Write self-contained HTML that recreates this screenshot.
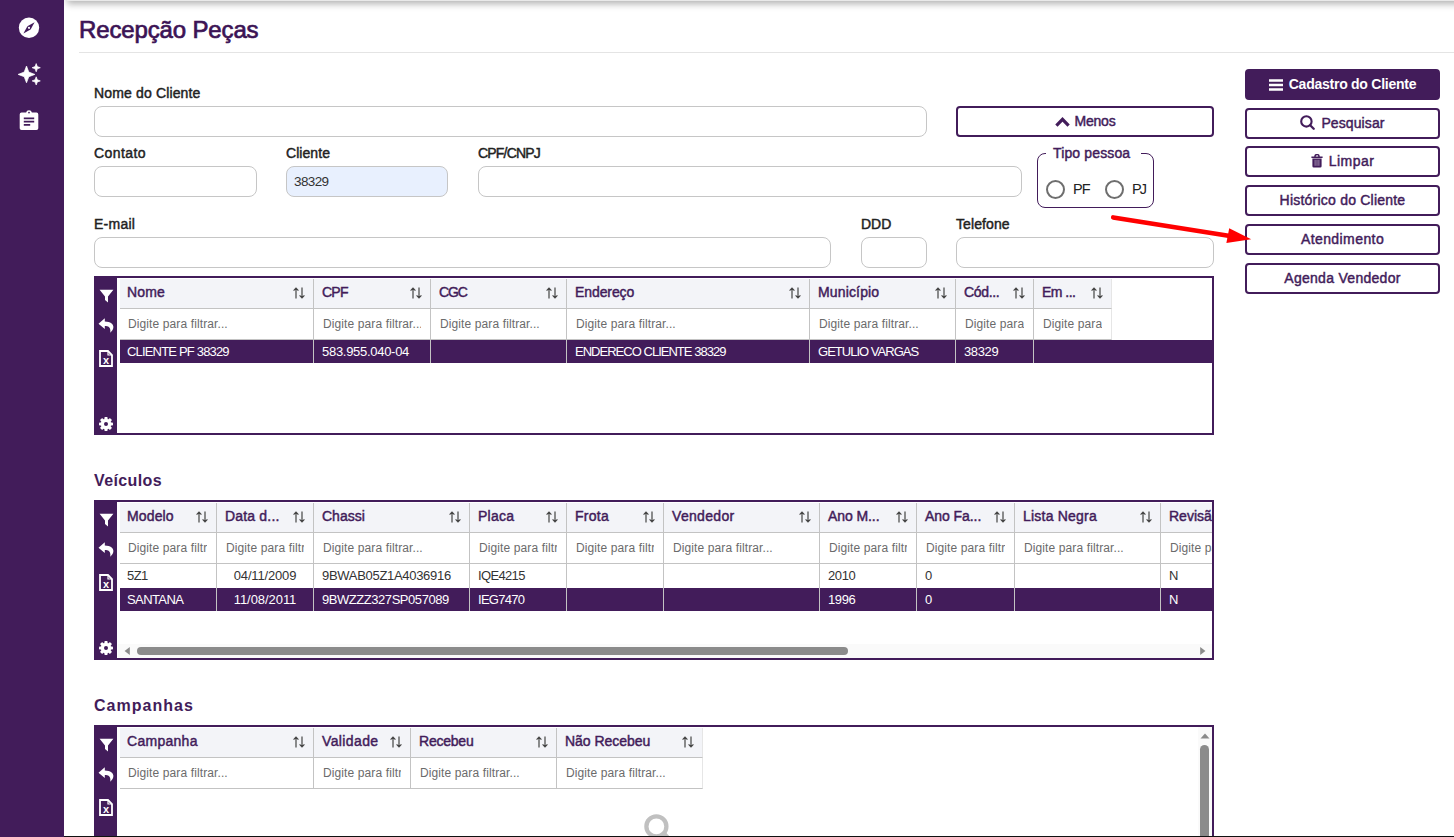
<!DOCTYPE html>
<html lang="pt-BR">
<head>
<meta charset="utf-8">
<title>Recepção Peças</title>
<style>
*{box-sizing:border-box;margin:0;padding:0}
html,body{width:1454px;height:837px;overflow:hidden;background:#fff}
body{position:relative;font-family:"Liberation Sans",sans-serif;color:#222;font-size:14px}
.abs{position:absolute}
#side{left:0;top:0;width:64px;height:837px;background:#421c5a}
#topshadow{left:67px;top:-11px;width:1400px;height:12px;background:#e9e9e9;box-shadow:0 3px 7px rgba(0,0,0,.3)}
#side{z-index:2}
h1{position:absolute;left:79px;top:15px;font-size:24px;line-height:30px;font-weight:normal;color:#3c1355;white-space:nowrap;-webkit-text-stroke:.7px #3c1355}
#hr{left:79px;top:52px;width:1375px;height:1px;background:#e4e4e4}
.sb{-webkit-text-stroke:.45px currentColor}
.lbl{position:absolute;font-size:14px;line-height:16px;color:#222;white-space:nowrap}
.inp{position:absolute;height:31px;border:1px solid #c6c6c6;border-radius:8px;background:#fff;font-size:13px;line-height:30px;padding-left:7px;color:#333}
.btn{position:absolute;height:31px;border:2px solid #421c5a;border-radius:4px;background:#fff;color:#421c5a;font-size:14px;line-height:27px;text-align:center;white-space:nowrap}
.btn.fill{background:#421c5a;color:#fff}
.btn svg{vertical-align:-2px;margin-right:6px}
h2{position:absolute;left:94px;font-size:16px;line-height:20px;font-weight:bold;color:#421c5a;white-space:nowrap}
.grid{position:absolute;left:94px;width:1120px;border:2px solid #421c5a;background:#fff;overflow:hidden}
.strip{position:absolute;left:0;top:0;bottom:0;width:21px;background:#421c5a}
.strip svg{position:absolute;left:3px}
.th,.tf,.td{position:absolute;white-space:nowrap;overflow:hidden}
.th{top:1px;height:30px;background:#f3f4f8;border-right:1px solid #c3c3c3;border-bottom:1px solid #c3c3c3;color:#421c5a;font-size:14px;line-height:27px;padding-left:7px}
.th i{position:absolute;right:8px;top:8px;width:12px;height:12px;line-height:0}
.th i svg{display:block}
.tf{top:31px;height:31px;border-right:1px solid #c3c3c3;border-bottom:1px solid #c3c3c3;color:#6b6b6b;font-size:12px;line-height:30px;padding-left:8px}
.tf b{display:block;font-weight:normal;overflow:hidden;margin-right:9px}
.td{height:24px;font-size:13px;line-height:24px;padding-left:7px;color:#333;border-right:1px solid #c3c3c3}
.sel{position:absolute;left:24px;right:0;height:23px;background:#421c5a}
.td.w{color:#fff;line-height:23px}
.radio{width:19px;height:19px;border:2px solid #6e6e6e;border-radius:50%;background:#fff}
.rtx{font-size:14.5px;line-height:16px;color:#222;white-space:nowrap}
</style>
</head>
<body>
<div id="side" class="abs">
<svg class="abs" style="left:17px;top:16px" width="24" height="24" viewBox="0 0 24 24"><circle cx="12" cy="11.8" r="10.2" fill="#fff"/><path d="M17.6 6.2 L13.6 13.4 L10.4 10.2 Z" fill="#421c5a"/><path d="M6.4 17.4 L10.4 10.2 L13.6 13.4 Z" fill="#421c5a"/><circle cx="12" cy="11.8" r="1.1" fill="#fff"/></svg>
<svg class="abs" style="left:17px;top:62px" width="26" height="26" viewBox="0 0 26 26"><g fill="#fff" stroke="#fff" stroke-width=".7" stroke-linejoin="round"><path d="M9.5 4 L11.8 10.1 L17.9 12.4 L11.8 14.7 L9.5 20.8 L7.2 14.7 L1.1 12.4 L7.2 10.1 Z"/><path d="M19.2 1.6 L20.3 4.6 L23.3 5.7 L20.3 6.8 L19.2 9.8 L18.1 6.8 L15.1 5.7 L18.1 4.6 Z"/><path d="M19.2 14.8 L20.3 17.8 L23.3 18.9 L20.3 20 L19.2 23 L18.1 20 L15.1 18.9 L18.1 17.8 Z"/></g></svg>
<svg class="abs" style="left:18px;top:109px" width="22" height="23" viewBox="0 0 22 23"><path d="M3.5 3.6 h4.6 a3 3 0 0 1 5.8 0 h4.6 a1.8 1.8 0 0 1 1.8 1.8 v13.8 a1.8 1.8 0 0 1 -1.8 1.8 h-15 a1.8 1.8 0 0 1 -1.8 -1.8 v-13.8 a1.8 1.8 0 0 1 1.8 -1.8z" fill="#fff"/><circle cx="11" cy="3.6" r="0.9" fill="#421c5a"/><path d="M5.8 9.4h10.4M5.8 12.6h10.4M5.8 15.8h6.4" stroke="#421c5a" stroke-width="1.8"/></svg>
</div>
<div id="topshadow" class="abs"></div>
<h1><span style="letter-spacing:-0.14px">Recepção Peças</span></h1>
<div id="hr" class="abs"></div>
<div class="lbl sb" style="left:94px;top:85px"><span style="letter-spacing:0.15px">Nome do Cliente</span></div>
<div class="inp" style="left:94px;top:106px;width:833px;"></div>
<div class="btn sb " style="left:956px;top:106px;width:258px"><svg width="15" height="11" viewBox="0 0 15 11" style="vertical-align:-1px;margin-right:5px"><path d="M1.4 9.6 L7.5 3.4 L13.6 9.6" fill="none" stroke="#421c5a" stroke-width="3.2"/></svg><span style="letter-spacing:-0.21px">Menos</span></div>
<div class="lbl sb" style="left:94px;top:145px"><span style="letter-spacing:0.42px">Contato</span></div>
<div class="inp" style="left:94px;top:166px;width:163px;"></div>
<div class="lbl sb" style="left:286px;top:145px"><span style="letter-spacing:0.06px">Cliente</span></div>
<div class="inp" style="left:286px;top:166px;width:162px;background:#e8f0fe;font-size:13.5px"><span style="letter-spacing:-0.61px">38329</span></div>
<div class="lbl sb" style="left:478px;top:145px"><span style="letter-spacing:-0.81px">CPF/CNPJ</span></div>
<div class="inp" style="left:478px;top:166px;width:544px;"></div>
<div class="abs" style="left:1037px;top:153px;width:117px;height:55px;border:1px solid #421c5a;border-radius:8px"></div>
<div class="abs sb" style="left:1046px;top:144px;width:95px;height:18px;background:#fff;color:#421c5a;font-size:14px;line-height:18px;padding-left:7px;white-space:nowrap"><span style="letter-spacing:0.14px">Tipo pessoa</span></div>
<div class="abs radio" style="left:1046px;top:180px"></div>
<div class="abs rtx" style="left:1073px;top:181px"><span style="letter-spacing:-1px">PF</span></div>
<div class="abs radio" style="left:1105px;top:180px"></div>
<div class="abs rtx" style="left:1132px;top:181px"><span style="letter-spacing:-1.8px">PJ</span></div>
<div class="lbl sb" style="left:94px;top:216px"><span style="letter-spacing:0.26px">E-mail</span></div>
<div class="inp" style="left:94px;top:237px;width:737px;"></div>
<div class="lbl sb" style="left:861px;top:216px"><span style="letter-spacing:-0.03px">DDD</span></div>
<div class="inp" style="left:861px;top:237px;width:66px;"></div>
<div class="lbl sb" style="left:956px;top:216px"><span style="letter-spacing:0.1px">Telefone</span></div>
<div class="inp" style="left:956px;top:237px;width:258px;"></div>
<div class="btn fill" style="left:1245px;top:69px;width:195px;font-weight:bold"><svg width="14" height="12" viewBox="0 0 14 12"><path d="M0 1.5h14M0 6h14M0 10.5h14" stroke="#fff" stroke-width="2.4"/></svg><span style="letter-spacing:-0.25px">Cadastro do Cliente</span></div>
<div class="btn sb " style="left:1245px;top:108px;width:195px"><svg width="15" height="15" viewBox="0 0 15 15"><circle cx="6.4" cy="6.4" r="5.2" fill="none" stroke="#421c5a" stroke-width="2.1"/><path d="M10.2 10.2 L13.7 13.7" stroke="#421c5a" stroke-width="2.3" stroke-linecap="round"/></svg><span style="letter-spacing:0.11px">Pesquisar</span></div>
<div class="btn sb " style="left:1245px;top:146px;width:195px"><svg width="12" height="14" viewBox="0 0 12 14"><path d="M0.4 3.2h11.2M4 3V2.2a2 1.6 0 0 1 4 0V3" fill="none" stroke="#421c5a" stroke-width="1.5"/><path d="M1.4 4.6h9.2v7.6a1.4 1.4 0 0 1 -1.4 1.4h-6.4a1.4 1.4 0 0 1 -1.4 -1.4z" fill="#421c5a"/><path d="M4.1 5.8v6M6 5.8v6M7.9 5.8v6" stroke="#cbbdd4" stroke-width=".7"/></svg><span style="letter-spacing:0.45px">Limpar</span></div>
<div class="btn sb " style="left:1245px;top:185px;width:195px"><span style="letter-spacing:0.22px">Histórico do Cliente</span></div>
<div class="btn sb " style="left:1245px;top:224px;width:195px"><span style="letter-spacing:0.42px">Atendimento</span></div>
<div class="btn sb " style="left:1245px;top:263px;width:195px"><span style="letter-spacing:0.29px">Agenda Vendedor</span></div>
<svg class="abs" style="left:1100px;top:205px" width="160" height="50" viewBox="1100 205 160 50"><path d="M1113.2 217.4 L1230 235.9" stroke="#ff0000" stroke-width="4.6" stroke-linecap="round"/><path d="M1251.2 239.2 L1226.4 242.9 L1229.2 228.2 Z" fill="#ff0000"/></svg>
<div class="grid" style="top:276px;height:159px">
<div class="strip">
<svg width="15" height="14" viewBox="0 0 15 14" style="top:11px"><path d="M0.6 0.8h13.8L9 7.4v6L6 11V7.4z" fill="#fff"/></svg>
<svg width="17" height="15" viewBox="0 0 17 15" style="top:40px;left:2px"><path d="M6.8 0.3 L0.5 5.7 L6.8 11.1 V8 C10.8 8 13 9.4 12.2 14.8 C17.5 10.5 16.5 3.6 6.8 3.4 Z" fill="#fff"/></svg>
<svg width="14" height="17" viewBox="0 0 14 17" style="top:72px"><path d="M1 1h8l4 4v11H1z" fill="none" stroke="#fff" stroke-width="1.8"/><path d="M9 1v4h4" fill="none" stroke="#fff" stroke-width="1.2"/><text x="7" y="14.2" text-anchor="middle" font-family="Liberation Sans,sans-serif" font-weight="bold" font-size="11" fill="#fff">x</text></svg>
<svg width="14" height="14" viewBox="0 0 14 14" style="top:139px"><g fill="#fff"><circle cx="7" cy="7" r="5.2"/><rect x="5.4" y="0" width="3.2" height="14" rx=".8"/><rect x="5.4" y="0" width="3.2" height="14" rx=".8" transform="rotate(45 7 7)"/><rect x="5.4" y="0" width="3.2" height="14" rx=".8" transform="rotate(90 7 7)"/><rect x="5.4" y="0" width="3.2" height="14" rx=".8" transform="rotate(135 7 7)"/></g><circle cx="7" cy="7" r="2" fill="#421c5a"/></svg>
</div>
<div class="sel" style="top:62px"></div>
<div class="th sb" style="left:24px;width:194px;"><span style="letter-spacing:0.16px">Nome</span><i><svg width="12" height="12" viewBox="0 0 12 12"><path d="M3 11.5V1.2M0.6 3.6L3 1.2L5.4 3.6M9 0.5V10.8M6.6 8.4L9 10.8L11.4 8.4" fill="none" stroke="#444" stroke-width="1.2"/></svg></i></div>
<div class="tf" style="left:24px;width:194px;"><b><span style="letter-spacing:0.11px">Digite para filtrar...</span></b></div>
<div class="td w" style="left:24px;width:194px;top:62px;height:23px;"><span style="letter-spacing:-0.82px">CLIENTE PF 38329</span></div>
<div class="th sb" style="left:218px;width:117px;padding-left:8px;"><span style="letter-spacing:-0.75px">CPF</span><i><svg width="12" height="12" viewBox="0 0 12 12"><path d="M3 11.5V1.2M0.6 3.6L3 1.2L5.4 3.6M9 0.5V10.8M6.6 8.4L9 10.8L11.4 8.4" fill="none" stroke="#444" stroke-width="1.2"/></svg></i></div>
<div class="tf" style="left:218px;width:117px;padding-left:9px;"><b><span style="letter-spacing:0.11px">Digite para filtrar...</span></b></div>
<div class="td w" style="left:218px;width:117px;top:62px;height:23px;padding-left:8px;"><span style="letter-spacing:-0.29px">583.955.040-04</span></div>
<div class="th sb" style="left:335px;width:136px;padding-left:8px;"><span style="letter-spacing:-1.12px">CGC</span><i><svg width="12" height="12" viewBox="0 0 12 12"><path d="M3 11.5V1.2M0.6 3.6L3 1.2L5.4 3.6M9 0.5V10.8M6.6 8.4L9 10.8L11.4 8.4" fill="none" stroke="#444" stroke-width="1.2"/></svg></i></div>
<div class="tf" style="left:335px;width:136px;padding-left:9px;"><b><span style="letter-spacing:0.11px">Digite para filtrar...</span></b></div>
<div class="td w" style="left:335px;width:136px;top:62px;height:23px;padding-left:8px;"></div>
<div class="th sb" style="left:471px;width:243px;padding-left:8px;"><span style="letter-spacing:-0.09px">Endereço</span><i><svg width="12" height="12" viewBox="0 0 12 12"><path d="M3 11.5V1.2M0.6 3.6L3 1.2L5.4 3.6M9 0.5V10.8M6.6 8.4L9 10.8L11.4 8.4" fill="none" stroke="#444" stroke-width="1.2"/></svg></i></div>
<div class="tf" style="left:471px;width:243px;padding-left:9px;"><b><span style="letter-spacing:0.11px">Digite para filtrar...</span></b></div>
<div class="td w" style="left:471px;width:243px;top:62px;height:23px;padding-left:8px;"><span style="letter-spacing:-0.98px">ENDERECO CLIENTE 38329</span></div>
<div class="th sb" style="left:714px;width:146px;padding-left:8px;"><span style="letter-spacing:0.15px">Município</span><i><svg width="12" height="12" viewBox="0 0 12 12"><path d="M3 11.5V1.2M0.6 3.6L3 1.2L5.4 3.6M9 0.5V10.8M6.6 8.4L9 10.8L11.4 8.4" fill="none" stroke="#444" stroke-width="1.2"/></svg></i></div>
<div class="tf" style="left:714px;width:146px;padding-left:9px;"><b><span style="letter-spacing:0.11px">Digite para filtrar...</span></b></div>
<div class="td w" style="left:714px;width:146px;top:62px;height:23px;padding-left:8px;"><span style="letter-spacing:-0.98px">GETULIO VARGAS</span></div>
<div class="th sb" style="left:860px;width:78px;padding-left:8px;"><span style="letter-spacing:-0.35px">Cód...</span><i><svg width="12" height="12" viewBox="0 0 12 12"><path d="M3 11.5V1.2M0.6 3.6L3 1.2L5.4 3.6M9 0.5V10.8M6.6 8.4L9 10.8L11.4 8.4" fill="none" stroke="#444" stroke-width="1.2"/></svg></i></div>
<div class="tf" style="left:860px;width:78px;padding-left:9px;"><b><span style="letter-spacing:0.11px">Digite para filtrar...</span></b></div>
<div class="td w" style="left:860px;width:78px;top:62px;height:23px;padding-left:8px;"><span style="letter-spacing:-0.38px">38329</span></div>
<div class="th sb" style="left:938px;width:78px;padding-left:8px;border-right-color:#e6e6e6;"><span style="letter-spacing:-0.51px">Em ...</span><i><svg width="12" height="12" viewBox="0 0 12 12"><path d="M3 11.5V1.2M0.6 3.6L3 1.2L5.4 3.6M9 0.5V10.8M6.6 8.4L9 10.8L11.4 8.4" fill="none" stroke="#444" stroke-width="1.2"/></svg></i></div>
<div class="tf" style="left:938px;width:78px;padding-left:9px;border-right-color:#e6e6e6;"><b><span style="letter-spacing:0.11px">Digite para filtrar...</span></b></div>
<div class="td w" style="left:938px;width:78px;top:62px;height:23px;padding-left:8px;border-right:none;"></div>

</div>
<h2 style="top:471px"><span style="letter-spacing:0.38px">Veículos</span></h2>
<div class="grid" style="top:500px;height:160px">
<div class="strip">
<svg width="15" height="14" viewBox="0 0 15 14" style="top:11px"><path d="M0.6 0.8h13.8L9 7.4v6L6 11V7.4z" fill="#fff"/></svg>
<svg width="17" height="15" viewBox="0 0 17 15" style="top:40px;left:2px"><path d="M6.8 0.3 L0.5 5.7 L6.8 11.1 V8 C10.8 8 13 9.4 12.2 14.8 C17.5 10.5 16.5 3.6 6.8 3.4 Z" fill="#fff"/></svg>
<svg width="14" height="17" viewBox="0 0 14 17" style="top:72px"><path d="M1 1h8l4 4v11H1z" fill="none" stroke="#fff" stroke-width="1.8"/><path d="M9 1v4h4" fill="none" stroke="#fff" stroke-width="1.2"/><text x="7" y="14.2" text-anchor="middle" font-family="Liberation Sans,sans-serif" font-weight="bold" font-size="11" fill="#fff">x</text></svg>
<svg width="14" height="14" viewBox="0 0 14 14" style="top:139px"><g fill="#fff"><circle cx="7" cy="7" r="5.2"/><rect x="5.4" y="0" width="3.2" height="14" rx=".8"/><rect x="5.4" y="0" width="3.2" height="14" rx=".8" transform="rotate(45 7 7)"/><rect x="5.4" y="0" width="3.2" height="14" rx=".8" transform="rotate(90 7 7)"/><rect x="5.4" y="0" width="3.2" height="14" rx=".8" transform="rotate(135 7 7)"/></g><circle cx="7" cy="7" r="2" fill="#421c5a"/></svg>
</div>
<div class="sel" style="top:86px"></div>
<div class="th sb" style="left:24px;width:97px;"><span style="letter-spacing:0.14px">Modelo</span><i><svg width="12" height="12" viewBox="0 0 12 12"><path d="M3 11.5V1.2M0.6 3.6L3 1.2L5.4 3.6M9 0.5V10.8M6.6 8.4L9 10.8L11.4 8.4" fill="none" stroke="#444" stroke-width="1.2"/></svg></i></div>
<div class="tf" style="left:24px;width:97px;"><b><span style="letter-spacing:0.11px">Digite para filtrar...</span></b></div>
<div class="td" style="left:24px;width:97px;top:62px;height:24px;"><span style="letter-spacing:-0.55px">5Z1</span></div>
<div class="td w" style="left:24px;width:97px;top:86px;height:23px;"><span style="letter-spacing:-0.6px">SANTANA</span></div>
<div class="th sb" style="left:121px;width:97px;padding-left:8px;"><span style="letter-spacing:0.18px">Data d...</span><i><svg width="12" height="12" viewBox="0 0 12 12"><path d="M3 11.5V1.2M0.6 3.6L3 1.2L5.4 3.6M9 0.5V10.8M6.6 8.4L9 10.8L11.4 8.4" fill="none" stroke="#444" stroke-width="1.2"/></svg></i></div>
<div class="tf" style="left:121px;width:97px;padding-left:9px;"><b><span style="letter-spacing:0.11px">Digite para filtrar...</span></b></div>
<div class="td" style="left:121px;width:97px;top:62px;height:24px;padding-left:8px;text-align:center;padding-left:0"><span style="letter-spacing:-0.16px">04/11/2009</span></div>
<div class="td w" style="left:121px;width:97px;top:86px;height:23px;padding-left:8px;text-align:center;padding-left:0"><span style="letter-spacing:-0.06px">11/08/2011</span></div>
<div class="th sb" style="left:218px;width:156px;padding-left:8px;"><span style="letter-spacing:-0.01px">Chassi</span><i><svg width="12" height="12" viewBox="0 0 12 12"><path d="M3 11.5V1.2M0.6 3.6L3 1.2L5.4 3.6M9 0.5V10.8M6.6 8.4L9 10.8L11.4 8.4" fill="none" stroke="#444" stroke-width="1.2"/></svg></i></div>
<div class="tf" style="left:218px;width:156px;padding-left:9px;"><b><span style="letter-spacing:0.11px">Digite para filtrar...</span></b></div>
<div class="td" style="left:218px;width:156px;top:62px;height:24px;padding-left:8px;"><span style="letter-spacing:-0.3px">9BWAB05Z1A4036916</span></div>
<div class="td w" style="left:218px;width:156px;top:86px;height:23px;padding-left:8px;"><span style="letter-spacing:-0.45px">9BWZZZ327SP057089</span></div>
<div class="th sb" style="left:374px;width:97px;padding-left:8px;"><span style="letter-spacing:0.24px">Placa</span><i><svg width="12" height="12" viewBox="0 0 12 12"><path d="M3 11.5V1.2M0.6 3.6L3 1.2L5.4 3.6M9 0.5V10.8M6.6 8.4L9 10.8L11.4 8.4" fill="none" stroke="#444" stroke-width="1.2"/></svg></i></div>
<div class="tf" style="left:374px;width:97px;padding-left:9px;"><b><span style="letter-spacing:0.11px">Digite para filtrar...</span></b></div>
<div class="td" style="left:374px;width:97px;top:62px;height:24px;padding-left:8px;"><span style="letter-spacing:-0.65px">IQE4215</span></div>
<div class="td w" style="left:374px;width:97px;top:86px;height:23px;padding-left:8px;"><span style="letter-spacing:-0.73px">IEG7470</span></div>
<div class="th sb" style="left:471px;width:97px;padding-left:8px;"><span style="letter-spacing:0.26px">Frota</span><i><svg width="12" height="12" viewBox="0 0 12 12"><path d="M3 11.5V1.2M0.6 3.6L3 1.2L5.4 3.6M9 0.5V10.8M6.6 8.4L9 10.8L11.4 8.4" fill="none" stroke="#444" stroke-width="1.2"/></svg></i></div>
<div class="tf" style="left:471px;width:97px;padding-left:9px;"><b><span style="letter-spacing:0.11px">Digite para filtrar...</span></b></div>
<div class="td" style="left:471px;width:97px;top:62px;height:24px;padding-left:8px;"></div>
<div class="td w" style="left:471px;width:97px;top:86px;height:23px;padding-left:8px;"></div>
<div class="th sb" style="left:568px;width:156px;padding-left:8px;"><span style="letter-spacing:0.32px">Vendedor</span><i><svg width="12" height="12" viewBox="0 0 12 12"><path d="M3 11.5V1.2M0.6 3.6L3 1.2L5.4 3.6M9 0.5V10.8M6.6 8.4L9 10.8L11.4 8.4" fill="none" stroke="#444" stroke-width="1.2"/></svg></i></div>
<div class="tf" style="left:568px;width:156px;padding-left:9px;"><b><span style="letter-spacing:0.11px">Digite para filtrar...</span></b></div>
<div class="td" style="left:568px;width:156px;top:62px;height:24px;padding-left:8px;"></div>
<div class="td w" style="left:568px;width:156px;top:86px;height:23px;padding-left:8px;"></div>
<div class="th sb" style="left:724px;width:97px;padding-left:8px;"><span style="letter-spacing:-0.08px">Ano M...</span><i><svg width="12" height="12" viewBox="0 0 12 12"><path d="M3 11.5V1.2M0.6 3.6L3 1.2L5.4 3.6M9 0.5V10.8M6.6 8.4L9 10.8L11.4 8.4" fill="none" stroke="#444" stroke-width="1.2"/></svg></i></div>
<div class="tf" style="left:724px;width:97px;padding-left:9px;"><b><span style="letter-spacing:0.11px">Digite para filtrar...</span></b></div>
<div class="td" style="left:724px;width:97px;top:62px;height:24px;padding-left:8px;"><span style="letter-spacing:-0.36px">2010</span></div>
<div class="td w" style="left:724px;width:97px;top:86px;height:23px;padding-left:8px;"><span style="letter-spacing:-0.36px">1996</span></div>
<div class="th sb" style="left:821px;width:98px;padding-left:8px;"><span style="letter-spacing:-0.06px">Ano Fa...</span><i><svg width="12" height="12" viewBox="0 0 12 12"><path d="M3 11.5V1.2M0.6 3.6L3 1.2L5.4 3.6M9 0.5V10.8M6.6 8.4L9 10.8L11.4 8.4" fill="none" stroke="#444" stroke-width="1.2"/></svg></i></div>
<div class="tf" style="left:821px;width:98px;padding-left:9px;"><b><span style="letter-spacing:0.11px">Digite para filtrar...</span></b></div>
<div class="td" style="left:821px;width:98px;top:62px;height:24px;padding-left:8px;">0</div>
<div class="td w" style="left:821px;width:98px;top:86px;height:23px;padding-left:8px;">0</div>
<div class="th sb" style="left:919px;width:146px;padding-left:8px;"><span style="letter-spacing:0.22px">Lista Negra</span><i><svg width="12" height="12" viewBox="0 0 12 12"><path d="M3 11.5V1.2M0.6 3.6L3 1.2L5.4 3.6M9 0.5V10.8M6.6 8.4L9 10.8L11.4 8.4" fill="none" stroke="#444" stroke-width="1.2"/></svg></i></div>
<div class="tf" style="left:919px;width:146px;padding-left:9px;"><b><span style="letter-spacing:0.11px">Digite para filtrar...</span></b></div>
<div class="td" style="left:919px;width:146px;top:62px;height:24px;padding-left:8px;"></div>
<div class="td w" style="left:919px;width:146px;top:86px;height:23px;padding-left:8px;"></div>
<div class="th sb" style="left:1065px;width:100px;padding-left:8px;">Revisão<i><svg width="12" height="12" viewBox="0 0 12 12"><path d="M3 11.5V1.2M0.6 3.6L3 1.2L5.4 3.6M9 0.5V10.8M6.6 8.4L9 10.8L11.4 8.4" fill="none" stroke="#444" stroke-width="1.2"/></svg></i></div>
<div class="tf" style="left:1065px;width:100px;padding-left:9px;"><b><span style="letter-spacing:0.11px">Digite para filtrar...</span></b></div>
<div class="td" style="left:1065px;width:100px;top:62px;height:24px;padding-left:8px;">N</div>
<div class="td w" style="left:1065px;width:100px;top:86px;height:23px;padding-left:8px;">N</div>
<div class="abs" style="left:22px;right:0;bottom:0;height:14px;background:#fafafa"></div>
<div class="abs" style="left:41px;top:145px;width:711px;height:8px;border-radius:4px;background:#8b8b8b"></div>
<svg class="abs" style="left:28px;top:144px" width="7" height="10" viewBox="0 0 6 8"><path d="M5 0.5v7L0.5 4z" fill="#8b8b8b"/></svg>
<svg class="abs" style="left:1103px;top:144px" width="7" height="10" viewBox="0 0 6 8"><path d="M1 0.5v7L5.5 4z" fill="#8b8b8b"/></svg>
</div>
<h2 style="top:696px"><span style="letter-spacing:1.03px">Campanhas</span></h2>
<div class="grid" style="top:725px;height:130px">
<div class="strip">
<svg width="15" height="14" viewBox="0 0 15 14" style="top:11px"><path d="M0.6 0.8h13.8L9 7.4v6L6 11V7.4z" fill="#fff"/></svg>
<svg width="17" height="15" viewBox="0 0 17 15" style="top:40px;left:2px"><path d="M6.8 0.3 L0.5 5.7 L6.8 11.1 V8 C10.8 8 13 9.4 12.2 14.8 C17.5 10.5 16.5 3.6 6.8 3.4 Z" fill="#fff"/></svg>
<svg width="14" height="17" viewBox="0 0 14 17" style="top:72px"><path d="M1 1h8l4 4v11H1z" fill="none" stroke="#fff" stroke-width="1.8"/><path d="M9 1v4h4" fill="none" stroke="#fff" stroke-width="1.2"/><text x="7" y="14.2" text-anchor="middle" font-family="Liberation Sans,sans-serif" font-weight="bold" font-size="11" fill="#fff">x</text></svg>
</div>
<div class="th sb" style="left:24px;width:194px;"><span style="letter-spacing:0.28px">Campanha</span><i><svg width="12" height="12" viewBox="0 0 12 12"><path d="M3 11.5V1.2M0.6 3.6L3 1.2L5.4 3.6M9 0.5V10.8M6.6 8.4L9 10.8L11.4 8.4" fill="none" stroke="#444" stroke-width="1.2"/></svg></i></div>
<div class="tf" style="left:24px;width:194px;"><b><span style="letter-spacing:0.11px">Digite para filtrar...</span></b></div>
<div class="th sb" style="left:218px;width:97px;padding-left:8px;"><span style="letter-spacing:0.38px">Validade</span><i><svg width="12" height="12" viewBox="0 0 12 12"><path d="M3 11.5V1.2M0.6 3.6L3 1.2L5.4 3.6M9 0.5V10.8M6.6 8.4L9 10.8L11.4 8.4" fill="none" stroke="#444" stroke-width="1.2"/></svg></i></div>
<div class="tf" style="left:218px;width:97px;padding-left:9px;"><b><span style="letter-spacing:0.11px">Digite para filtrar...</span></b></div>
<div class="th sb" style="left:315px;width:146px;padding-left:8px;"><span style="letter-spacing:-0.22px">Recebeu</span><i><svg width="12" height="12" viewBox="0 0 12 12"><path d="M3 11.5V1.2M0.6 3.6L3 1.2L5.4 3.6M9 0.5V10.8M6.6 8.4L9 10.8L11.4 8.4" fill="none" stroke="#444" stroke-width="1.2"/></svg></i></div>
<div class="tf" style="left:315px;width:146px;padding-left:9px;"><b><span style="letter-spacing:0.11px">Digite para filtrar...</span></b></div>
<div class="th sb" style="left:461px;width:146px;padding-left:8px;border-right-color:#e6e6e6;"><span style="letter-spacing:-0.03px">Não Recebeu</span><i><svg width="12" height="12" viewBox="0 0 12 12"><path d="M3 11.5V1.2M0.6 3.6L3 1.2L5.4 3.6M9 0.5V10.8M6.6 8.4L9 10.8L11.4 8.4" fill="none" stroke="#444" stroke-width="1.2"/></svg></i></div>
<div class="tf" style="left:461px;width:146px;padding-left:9px;border-right-color:#e6e6e6;"><b><span style="letter-spacing:0.11px">Digite para filtrar...</span></b></div>
<div class="abs" style="left:1102px;top:0;width:14px;bottom:0;background:#fafafa"></div>
<div class="abs" style="left:1104px;top:18px;width:9px;height:120px;border-radius:4.5px;background:#8b8b8b"></div>
<svg class="abs" style="left:1104px;top:6px" width="10" height="6" viewBox="0 0 10 6"><path d="M0.5 5.5h9L5 0.5z" fill="#8b8b8b"/></svg>
<svg class="abs" style="left:546px;top:85px" width="30" height="30" viewBox="0 0 30 30"><circle cx="14.4" cy="14.4" r="10" fill="none" stroke="#c0c0c0" stroke-width="4.3"/><path d="M22 22L30 30" stroke="#c0c0c0" stroke-width="4.6"/></svg>
</div>
<div class="abs" style="left:0;top:836px;width:1454px;height:1px;background:#111"></div>
</body>
</html>
